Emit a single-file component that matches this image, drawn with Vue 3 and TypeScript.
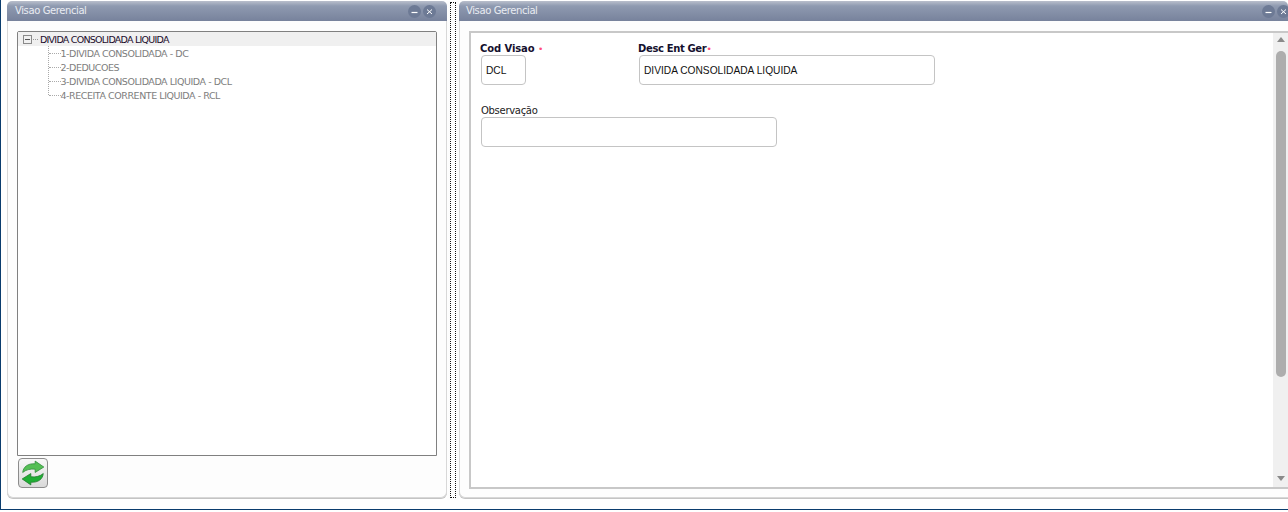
<script setup lang="ts">
const items = [
  '1-DIVIDA CONSOLIDADA - DC',
  '2-DEDUCOES',
  '3-DIVIDA CONSOLIDADA LIQUIDA - DCL',
  '4-RECEITA CORRENTE LIQUIDA - RCL',
]
</script>

<template>
  <div class="desk">
    <section class="win left">
      <header class="bar">
        <span class="title">Visao Gerencial</span>
        <span class="ctl">
          <svg class="btn" viewBox="0 0 13 13"><circle cx="6.500" cy="6.500" r="6.500" fill="#6d7a95"/><path d="M3.500 7.500h6" stroke="#fff" stroke-width="1.200"/></svg>
          <svg class="btn" viewBox="0 0 13 13"><circle cx="6.500" cy="6.500" r="6.500" fill="#6d7a95"/><path d="M4 4.500l5 4.500M9 4.500l-5 4.500" stroke="#fff" stroke-width="1"/></svg>
        </span>
      </header>
      <div class="body lbody">
        <div class="tree">
          <div class="root">
            <span class="box"><i></i></span>
            <span class="dots"></span>
            <span class="rootlabel">DIVIDA CONSOLIDADA LIQUIDA</span>
          </div>
          <ul class="kids">
            <li v-for="t in items" :key="t"><span class="tick"></span><span class="kid">{{ t }}</span></li>
          </ul>
        </div>
        <button class="refresh" type="button" aria-label="Atualizar">
          <svg viewBox="0 0 24 24" width="26" height="26">
            <path d="M2.500 11.500C3 6.500 7 3 14 3.500V1L22 6.500L14 11.500V8.500C9.500 8 5.500 9 2.500 11.500Z" fill="#55bf55" stroke="#2c8a38" stroke-width="0.700"/>
            <path d="M21.500 12.500C21 17.500 17 21 10 20.500V23L2 17.500L10 12.500V15.500C14.500 16 18.500 15 21.500 12.500Z" fill="#1fae34" stroke="#1f7a2a" stroke-width="0.700"/>
          </svg>
        </button>
      </div>
    </section>

    <div class="splitter"><div class="grip"></div></div>

    <section class="win right">
      <header class="bar">
        <span class="title">Visao Gerencial</span>
        <span class="ctl">
          <svg class="btn" viewBox="0 0 13 13"><circle cx="6.500" cy="6.500" r="6.500" fill="#6d7a95"/><path d="M3.500 7.500h6" stroke="#fff" stroke-width="1.200"/></svg>
          <svg class="btn" viewBox="0 0 13 13"><circle cx="6.500" cy="6.500" r="6.500" fill="#6d7a95"/><path d="M4 4.500l5 4.500M9 4.500l-5 4.500" stroke="#fff" stroke-width="1"/></svg>
        </span>
      </header>
      <div class="body rbody">
        <div class="form">
          <div class="content">
            <div class="row1">
              <div class="f cod">
                <label class="strong">Cod Visao <em>•</em></label>
                <input class="inp" value="DCL" />
              </div>
              <div class="f desc">
                <label class="strong">Desc Ent Ger<em>•</em></label>
                <input class="inp" value="DIVIDA CONSOLIDADA LIQUIDA" />
              </div>
            </div>
            <div class="f obs">
              <label class="soft">Observação</label>
              <input class="inp" value="" />
            </div>
          </div>
          <div class="scroll">
            <span class="up"></span>
            <span class="thumb"></span>
            <span class="down"></span>
          </div>
        </div>
      </div>
    </section>
  </div>
</template>

<style>
html, body { margin: 0; background: #fff; }
</style>

<style scoped>
.desk {
  box-sizing: border-box;
  width: 1288px;
  height: 510px;
  display: flex;
  background: #fff;
  border-left: 1px solid #0b3d6e;
  border-bottom: 1px solid #0b3d6e;
  padding: 1px 0 11px 6px;
  font-family: "DejaVu Sans", "Liberation Sans", sans-serif;
  overflow: hidden;
}
.win { display: flex; flex-direction: column; }
.left { width: 440px; }
.right { flex: 1; min-width: 0; }
.bar {
  height: 20px;
  flex: none;
  display: flex;
  align-items: center;
  justify-content: space-between;
  padding: 0 11px 0 8px;
  border-radius: 5px 5px 0 0;
  background: linear-gradient(#b9bfcc, #8f9ab0 25%, #77829c);
  color: #e9ecf2;
}
.right .bar { padding: 0 0 0 7px; }
.right .ctl { margin-right: -2px; }
.title { font-size: 10px; line-height: 20px; letter-spacing: -0.4px; }
.ctl { display: flex; gap: 2px; }
.btn { width: 13px; height: 13px; display: block; flex: none; }
.body {
  flex: 1;
  min-height: 0;
  box-sizing: border-box;
  background: #fdfdfd;
  border: 1px solid #d8d8d8;
  border-top: none;
  border-radius: 0 0 6px 6px;
  box-shadow: 0 1px 0 #c4c4c4;
}
.lbody { padding: 10px 9px 9px 9px; display: flex; flex-direction: column; gap: 2px; }
.tree {
  flex: 1;
  min-height: 0;
  border: 1px solid #808080;
  border-radius: 2px 2px 0 0;
  background: #fff;
}
.root {
  height: 14px;
  background: #f0f0f0;
  display: flex;
  align-items: center;
  padding-left: 5px;
  font-size: 9.500px;
}
.box {
  width: 9px; height: 9px;
  box-sizing: border-box;
  border: 1px solid #8a8a8a;
  display: flex; align-items: center; justify-content: center;
  flex: none;
}
.box i { width: 5px; height: 1px; background: #555; }
.dots { width: 5px; border-top: 1px dotted #999; margin: 0 2px 0 1px; flex: none; }
.rootlabel { color: #1a0a2a; letter-spacing: -0.75px; white-space: nowrap; }
.kids {
  list-style: none;
  margin: 0 0 0 30px;
  padding: 0;
  border-left: 1px dotted #aaa;
  height: 49px;
}
.kids li {
  height: 14px;
  display: flex;
  align-items: center;
  font-size: 9.500px;
  color: #7d7d7d;
}
.tick { width: 11.500px; border-top: 1px dotted #aaa; flex: none; }
.kid { letter-spacing: -0.45px; white-space: nowrap; }
.refresh {
  width: 30px; height: 30px;
  padding: 0;
  margin-left: 1px;
  box-sizing: border-box;
  display: flex; align-items: center; justify-content: center;
  border: 1px solid #8c8c8c;
  border-radius: 4px;
  background: linear-gradient(#f8f8f8, #d9d9d9);
}
.splitter {
  width: 12px;
  flex: none;
  display: flex;
  justify-content: center;
  background: #fdfdfd;
  margin-bottom: -2px;
}
.grip {
  width: 4px;
  border: 1px dotted #111;
  margin-top: 1px;
  margin-bottom: 2px;
}
.rbody { padding: 10px 0 8px 9px; border-right: none; border-radius: 0 0 0 6px; }
.form {
  height: 100%;
  box-sizing: border-box;
  border: 2px solid #c8c8c8;
  border-right: none;
  background: #fff;
  display: flex;
}
.content { flex: 1; padding: 10px 0 0 10px; }
.row1 { display: flex; }
.f { display: flex; flex-direction: column; }
.cod { width: 158px; }
.cod .inp { width: 45px; }
.desc .inp { width: 296px; }
.row1 label { line-height: 12px; }
.obs { margin-top: 19px; }
.obs .inp { width: 296px; height: 30px; }
.inp {
  box-sizing: border-box;
  height: 30px;
  border: 1px solid #c4c4c4;
  border-radius: 4px;
  padding: 0 4px;
  font: 10.200px "Liberation Sans", Arial, sans-serif;
  color: #111;
  background: #fff;
  outline: none;
}
label { font-size: 10px; line-height: 13px; display: block; white-space: nowrap; }
.strong { font-weight: 700; color: #14102e; letter-spacing: -0.1px; margin-left: -1px; }
.desc .strong { letter-spacing: -0.35px; }
.strong em { color: #ff4d7a; font-style: normal; font-size: 9px; font-weight: 400; }
.soft { color: #222; letter-spacing: -0.3px; }
.scroll {
  width: 15px;
  flex: none;
  background: #f0f0f0;
  position: relative;
}
.up, .down { position: absolute; left: 4px; width: 0; height: 0; border-left: 4px solid transparent; border-right: 4px solid transparent; }
.up { top: 4px; border-bottom: 5px solid #8a8a8a; }
.down { bottom: 6px; border-top: 5px solid #8a8a8a; }
.thumb { position: absolute; left: 3px; top: 18px; width: 10px; height: 326px; background: #adadad; border-radius: 5px; }
</style>
